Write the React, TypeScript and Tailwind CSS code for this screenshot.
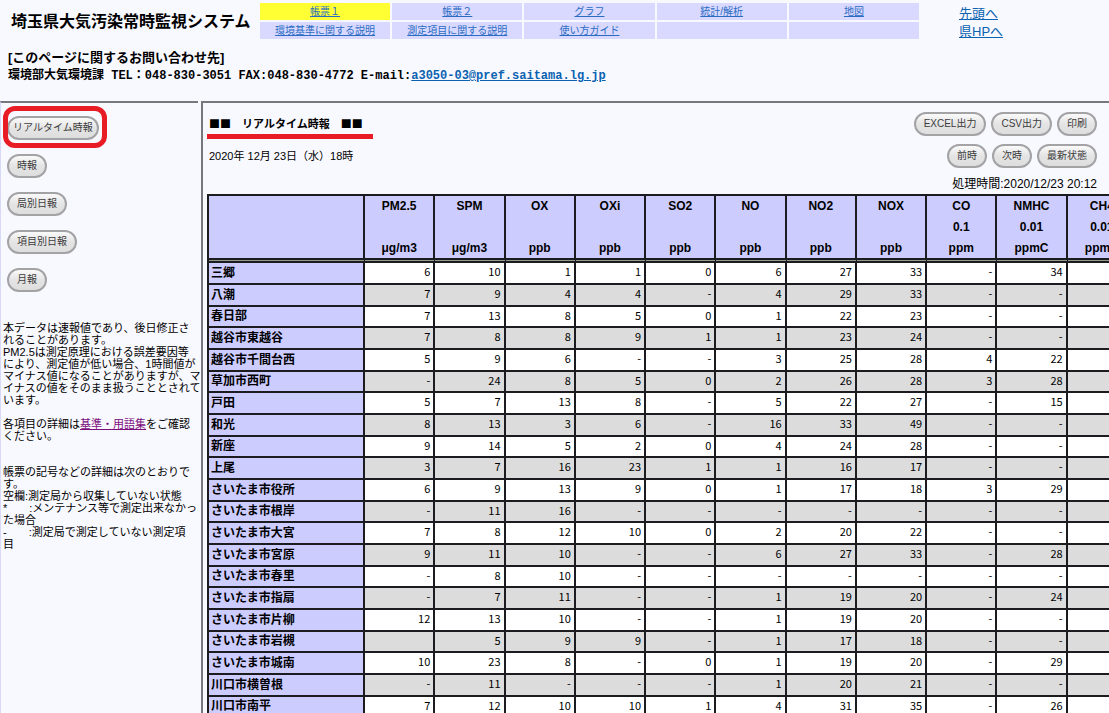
import React from "react";

const navItems = [
  "帳票１",
  "帳票２",
  "グラフ",
  "統計/解析",
  "地図",
  "環境基準に関する説明",
  "測定項目に関する説明",
  "使い方ガイド",
  "",
  "",
];

const columns: [string, string, string][] = [
  ["PM2.5", "", "μg/m3"],
  ["SPM", "", "μg/m3"],
  ["OX", "", "ppb"],
  ["OXi", "", "ppb"],
  ["SO2", "", "ppb"],
  ["NO", "", "ppb"],
  ["NO2", "", "ppb"],
  ["NOX", "", "ppb"],
  ["CO", "0.1", "ppm"],
  ["NMHC", "0.01", "ppmC"],
  ["CH4", "0.01", "ppmC"],
];

// "." stands for a missing value
const stations: [string, string][] = [
  ["三郷", "6 10 1 1 0 6 27 33 - 34"],
  ["八潮", "7 9 4 4 - 4 29 33 - -"],
  ["春日部", "7 13 8 5 0 1 22 23 - -"],
  ["越谷市東越谷", "7 8 8 9 1 1 23 24 - -"],
  ["越谷市千間台西", "5 9 6 - - 3 25 28 4 22"],
  ["草加市西町", "- 24 8 5 0 2 26 28 3 28"],
  ["戸田", "5 7 13 8 - 5 22 27 - 15"],
  ["和光", "8 13 3 6 - 16 33 49 - -"],
  ["新座", "9 14 5 2 0 4 24 28 - -"],
  ["上尾", "3 7 16 23 1 1 16 17 - -"],
  ["さいたま市役所", "6 9 13 9 0 1 17 18 3 29"],
  ["さいたま市根岸", "- 11 16 - - - - - - -"],
  ["さいたま市大宮", "7 8 12 10 0 2 20 22 - -"],
  ["さいたま市宮原", "9 11 10 - - 6 27 33 - 28"],
  ["さいたま市春里", "- 8 10 - - - - - - -"],
  ["さいたま市指扇", "- 7 11 - - 1 19 20 - 24"],
  ["さいたま市片柳", "12 13 10 - - 1 19 20 - -"],
  ["さいたま市岩槻", ". 5 9 9 - 1 17 18 - -"],
  ["さいたま市城南", "10 23 8 - 0 1 19 20 - 29"],
  ["川口市横曽根", "- 11 - - - 1 20 21 - -"],
  ["川口市南平", "7 12 10 10 1 4 31 35 - 26"],
];

function Pill({ children, tight = false }: { children: React.ReactNode; tight?: boolean }) {
  return (
    <button
      type="button"
      className={
        "h-6 whitespace-nowrap rounded-full border-2 border-[#a3a3a6] bg-linear-to-b from-[#fafafa] via-[#e4e4e4] to-[#dedede] text-[10px] leading-5 text-[#3c3c3c] " +
        (tight ? "px-1" : "px-2")
      }
    >
      {children}
    </button>
  );
}

function Header() {
  return (
    <header className="shrink-0 pb-4">
      <div className="flex items-start">
        <h1 className="w-[260px] shrink-0 whitespace-nowrap pl-[11px] pt-2.5 text-base font-bold leading-6">
          埼玉県大気汚染常時監視システム
        </h1>
        <nav className="grid w-[659px] shrink-0 grid-cols-5 gap-0.5 pt-[3px] text-center text-[10px] leading-[17px]">
          {navItems.map((label, i) => (
            <div key={i} className={"h-[17px] " + (i === 0 ? "bg-[#ffff33]" : "bg-[#d9d9ff]")}>
              {label && (
                <a href="#" className="text-[#2a6cc4] underline">
                  {label}
                </a>
              )}
            </div>
          ))}
        </nav>
        <div className="flex flex-col items-start pl-10 pt-[5px] text-[13px] leading-[18px]">
          <a href="#" className="text-[#0a62b0] underline">先頭へ</a>
          <a href="#" className="text-[#0a62b0] underline">県HPへ</a>
        </div>
      </div>
      <div className="whitespace-nowrap pl-2 pt-2 text-[13px] font-bold leading-[17px]">
        <p>[このページに関するお問い合わせ先]</p>
        <p className="pt-0.5 font-['Liberation_Mono','Noto_Sans_CJK_JP',monospace] text-[12px]">
          環境部大気環境課 TEL：048-830-3051 FAX:048-830-4772 E-mail:
          <a href="mailto:a3050-03@pref.saitama.lg.jp" className="text-[#0a62b0] underline">
            a3050-03@pref.saitama.lg.jp
          </a>
        </p>
      </div>
    </header>
  );
}

function Sidebar() {
  return (
    <aside className="w-[198px] shrink-0 border-l border-[#d8d8f8] border-t-2 border-t-[#77777f]">
      <div className="flex flex-col items-start gap-3.5 pl-1.5 pt-[11px]">
        <div className="relative">
          <Pill tight>リアルタイム時報</Pill>
          <span className="pointer-events-none absolute -bottom-2 -left-1 -right-2 -top-2 rounded-xl border-5 border-[#e81c24]" />
        </div>
        <Pill>時報</Pill>
        <Pill>局別日報</Pill>
        <Pill>項目別日報</Pill>
        <Pill>月報</Pill>
      </div>
      <div className="whitespace-nowrap pl-0.5 pt-[30px] text-[11px] leading-3">
        <p>
          本データは速報値であり、後日修正さ
          <br />
          れることがあります。
          <br />
          PM2.5は測定原理における誤差要因等
          <br />
          により、測定値が低い場合、1時間値が
          <br />
          マイナス値になることがありますが、マ
          <br />
          イナスの値をそのまま扱うこととされて
          <br />
          います。
        </p>
        <p className="pt-3">
          各項目の詳細は
          <a href="#" className="text-[#7b0d7b] underline">基準・用語集</a>
          をご確認
          <br />
          ください。
        </p>
        <p className="pt-6">
          帳票の記号などの詳細は次のとおりで
          <br />
          す。
          <br />
          空欄:測定局から収集していない状態
          <br />
          *　　:メンテナンス等で測定出来なかっ
          <br />
          た場合
          <br />
          -　　:測定局で測定していない測定項
          <br />目
        </p>
      </div>
    </aside>
  );
}

function DataTable() {
  return (
    <table className="w-[931px] table-fixed border-separate border-spacing-0 border-l-2 border-t-2 border-[#1c1c20] bg-[#8f9c8c] text-xs">
      <thead>
        <tr className="h-[67px] leading-[21px]">
          <th
            scope="col"
            aria-label="測定局"
            className="w-[156px] border-b-5 border-r-2 border-double border-[#1c1c20] bg-[#ccccff] bg-clip-padding [border-right-style:solid]"
          />
          {columns.map(([name, scale, unit]) => (
            <th
              key={name}
              scope="col"
              className="border-b-5 border-r-2 border-double border-[#1c1c20] bg-[#ccccff] bg-clip-padding p-0 align-top font-bold [border-right-style:solid]"
            >
              <div className="h-[21px]">{name}</div>
              <div className="h-[21px]">{scale}</div>
              <div className="h-5">{unit}</div>
            </th>
          ))}
        </tr>
      </thead>
      <tbody>
        {stations.map(([name, values]) => (
          <tr key={name} className="group h-[22px] nth-[3n]:h-[21px]">
            <th
              scope="row"
              className="whitespace-nowrap border-b-2 border-r-2 border-[#1c1c20] bg-[#ccccff] p-0 pl-0.5 text-left font-bold leading-[19px]"
            >
              {name}
            </th>
            {columns.map(([column], i) => {
              const value = values.split(" ")[i] ?? ".";
              return (
                <td
                  key={column}
                  className="border-b-2 border-r-2 border-[#1c1c20] bg-white p-0 pr-[3px] text-right align-top font-['Noto_Sans_CJK_JP',sans-serif] text-[11px] leading-4 group-even:bg-[#dcdcdc]"
                >
                  {value === "." ? "" : value}
                </td>
              );
            })}
          </tr>
        ))}
      </tbody>
    </table>
  );
}

function Report() {
  return (
    <main className="ml-[3px] min-w-0 flex-1 overflow-hidden border-l-2 border-t-2 border-[#77777f] pl-1">
      <div className="flex justify-between pr-3 pt-[9px]">
        <div className="pt-1">
          <h2 className="w-fit border-b-5 border-[#e81c24] pb-[3px] pl-0.5 pr-2.5 font-['Noto_Sans_CJK_JP',sans-serif] text-[11px] font-bold leading-[15px]">
            ■■　リアルタイム時報　■■
          </h2>
          <p className="pl-0.5 pt-[7px] text-[11px] leading-5">2020年 12月 23日（水）18時</p>
        </div>
        <div className="flex flex-col items-end gap-2">
          <div className="flex gap-[5px]">
            <Pill>EXCEL出力</Pill>
            <Pill>CSV出力</Pill>
            <Pill>印刷</Pill>
          </div>
          <div className="flex gap-[5px]">
            <Pill>前時</Pill>
            <Pill>次時</Pill>
            <Pill>最新状態</Pill>
          </div>
          <p className="pb-0.5 text-xs leading-4">処理時間:2020/12/23 20:12</p>
        </div>
      </div>
      <DataTable />
    </main>
  );
}

export default function App() {
  return (
    <div className="flex h-screen flex-col overflow-hidden bg-[#f8f8ff] font-['Liberation_Sans','Noto_Sans_CJK_JP',sans-serif] text-black">
      <Header />
      <div className="flex min-h-0 flex-1">
        <Sidebar />
        <Report />
      </div>
    </div>
  );
}
